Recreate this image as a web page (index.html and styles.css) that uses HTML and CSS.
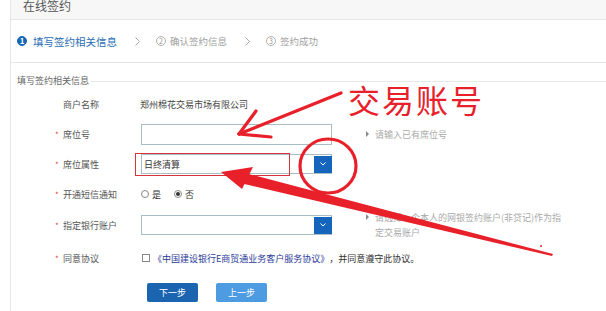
FILE: index.html
```html
<!DOCTYPE html>
<html lang="zh-CN">
<head>
    <meta charset="UTF-8">
    <meta name="viewport" content="width=device-width, initial-scale=1.0">
    <title>在线签约</title>
    <link rel="stylesheet" href="styles.css">
</head>
<body>
    <div class="page">
        <div class="page-head">
            <span class="page-title">在线签约</span>
        </div>

        <div class="steps">
            <div class="step step-active">
                <span class="step-num">1</span>
                <span class="step-text">填写签约相关信息</span>
            </div>
            <svg class="step-sep" width="5" height="9" viewBox="0 0 5 9"><polyline points="0.5,0.5 4.5,4.5 0.5,8.5" fill="none" stroke="#aaa" stroke-width="1"/></svg>
            <div class="step">
                <span class="step-num">2</span>
                <span class="step-text">确认签约信息</span>
            </div>
            <svg class="step-sep" width="5" height="9" viewBox="0 0 5 9"><polyline points="0.5,0.5 4.5,4.5 0.5,8.5" fill="none" stroke="#aaa" stroke-width="1"/></svg>
            <div class="step">
                <span class="step-num">3</span>
                <span class="step-text">签约成功</span>
            </div>
        </div>

        <div class="section">
            <div class="legend"><span>填写签约相关信息</span></div>

            <div class="row">
                <div class="row-label"><span class="star"></span>商户名称</div>
                <div class="row-value">郑州棉花交易市场有限公司</div>
            </div>

            <div class="row">
                <div class="row-label"><span class="star">*</span>席位号</div>
                <div class="input"></div>
                <div class="hint"><span class="hint-mark"></span><span class="hint-text">请输入已有席位号</span></div>
            </div>

            <div class="row">
                <div class="row-label"><span class="star">*</span>席位属性</div>
                <div class="select">
                    <span>日终清算</span>
                    <span class="select-btn"><svg width="6" height="4" viewBox="0 0 6 4"><polyline points="0.5,0.5 3,3 5.5,0.5" fill="none" stroke="#fff" stroke-width="1"/></svg></span>
                </div>
            </div>

            <div class="row">
                <div class="row-label"><span class="star">*</span>开通短信通知</div>
                <label class="radio"><span class="radio-dot"></span>是</label>
                <label class="radio radio-on"><span class="radio-dot"></span>否</label>
            </div>

            <div class="row row-mid">
                <div class="row-label"><span class="star">*</span>指定银行账户</div>
                <div class="select">
                    <span></span>
                    <span class="select-btn"><svg width="6" height="4" viewBox="0 0 6 4"><polyline points="0.5,0.5 3,3 5.5,0.5" fill="none" stroke="#fff" stroke-width="1"/></svg></span>
                </div>
                <div class="hint"><span class="hint-mark"></span><span class="hint-text">请选择一个本人的网银签约账户(非贷记)作为指定交易账户</span></div>
            </div>

            <div class="row row-tall">
                <div class="row-label"><span class="star">*</span>同意协议</div>
                <span class="checkbox"></span>
                <a class="agree-link">《中国建设银行E商贸通业务客户服务协议》</a>
                <span class="agree-text">，并同意遵守此协议。</span>
            </div>

            <div class="actions">
                <button class="btn btn-primary">下一步</button>
                <button class="btn btn-light">上一步</button>
            </div>
        </div>
    </div>

    <!-- red hand-drawn notes on top of the screenshot -->
    <svg class="marks" width="606" height="311" viewBox="0 0 606 311">
        <rect x="135.5" y="153.5" width="154" height="22" fill="none" stroke="#d8343a" stroke-width="1"/>
        <g stroke="#e8202a" stroke-width="3.2" stroke-linecap="round" fill="none">
            <path d="M341 93 L239 134"/>
            <path d="M239 134 L256 111"/>
            <path d="M239 134 L271 137"/>
            <ellipse cx="328" cy="166" rx="28" ry="27"/>
        </g>
        <polygon points="245,173 553,254 552,256 240,183" fill="#e8202a"/>
        <polygon points="221,172 253,167 242,189" fill="#e8202a"/>
        <circle cx="541" cy="246" r="1" fill="#e8202a"/>
        <text class="mark-text" x="348" y="113">交易账号</text>
    </svg>
</body>
</html>
```

FILE: styles.css
```css
* {
    box-sizing: border-box;
    margin: 0;
    padding: 0;
}

body {
    position: relative;
    font-family: "Noto Sans CJK SC", "Noto Sans", sans-serif;
    font-size: 9px;
    color: #444;
    background: #fff;
    width: 606px;
    height: 311px;
    overflow: hidden;
}

.page {
    margin-left: 10px;
    border-left: 1px solid #e6e6e6;
    height: 311px;
}

.page-head {
    height: 20px;
    background: #f7f7f7;
    border-bottom: 1px solid #e6e6e6;
    padding-left: 12px;
}

.page-title {
    display: block;
    font-size: 12px;
    line-height: 12px;
    color: #555;
}

.steps {
    display: flex;
    align-items: center;
    height: 43px;
    border-bottom: 1px solid #e6e6e6;
    padding-left: 6px;
}

.step {
    display: flex;
    align-items: center;
}

.step-num {
    width: 10px;
    height: 10px;
    border-radius: 50%;
    border: 1px solid #b0b0b0;
    color: #999;
    font-size: 7px;
    line-height: 8px;
    text-align: center;
}

.step-text {
    margin-left: 4px;
    color: #a0a0a0;
    font-size: 9.5px;
}

.step-active .step-num {
    background: #1767b8;
    border-color: #1767b8;
    color: #fff;
    font-size: 8px;
    font-weight: bold;
}

.step-active .step-text {
    margin-left: 6px;
    color: #2a6db5;
    font-size: 10.5px;
}

.step-sep {
    margin: 0 16px 0 18px;
}

.section {
    padding: 12px 0 0 6px;
}

.legend {
    display: flex;
    align-items: center;
    height: 12px;
    color: #666;
    line-height: 12px;
    margin-bottom: 2px;
}

.legend::after {
    content: "";
    flex: 1;
    border-top: 1px solid #e8e8e8;
    margin-left: 2px;
}

.row {
    display: flex;
    align-items: center;
    height: 30px;
    padding-left: 38px;
}

.row-mid {
    height: 32px;
}

.row-tall {
    height: 34px;
}

.row-label {
    display: flex;
    align-items: center;
    width: 86px;
    color: #555;
}

.star {
    width: 8px;
    color: #e04848;
    font-size: 8px;
}

.row-value {
    color: #444;
    margin-left: -1px;
}

.input {
    width: 191px;
    height: 21px;
    border: 1px solid #a9bdc6;
}

.select {
    display: flex;
    align-items: center;
    justify-content: space-between;
    width: 191px;
    height: 20px;
    border: 1px solid #a9bdc6;
    padding-left: 2px;
    color: #333;
}

.select-btn {
    display: flex;
    align-items: center;
    justify-content: center;
    width: 18px;
    height: 17px;
    margin-right: -1px;
    background: #1565bd;
}

.hint {
    display: flex;
    align-items: flex-start;
    margin-left: 34px;
    color: #aaa;
    line-height: 15px;
}

.hint-mark {
    width: 0;
    height: 0;
    margin-top: 4px;
    margin-right: 6px;
    border-left: 3px solid #888;
    border-top: 3px solid transparent;
    border-bottom: 3px solid transparent;
}

.hint-text {
    width: 188px;
}

.radio {
    display: flex;
    align-items: center;
    color: #333;
}

.radio + .radio {
    margin-left: 13px;
}

.radio-dot {
    width: 8px;
    height: 8px;
    border: 1px solid #888;
    border-radius: 50%;
    margin-right: 3px;
    display: flex;
    align-items: center;
    justify-content: center;
}

.radio-on .radio-dot::after {
    content: "";
    width: 4px;
    height: 4px;
    border-radius: 50%;
    background: #333;
}

.checkbox {
    width: 8px;
    height: 8px;
    border: 1px solid #888;
    margin-left: 1px;
}

.agree-link {
    margin-left: 3px;
    color: #2b3a9a;
}

.agree-text {
    color: #333;
}

.actions {
    display: flex;
    gap: 18px;
    margin: 8px 0 0 130px;
}

.btn {
    width: 51px;
    height: 19px;
    border: none;
    border-radius: 2px;
    color: #fff;
    font-family: inherit;
    font-size: 9px;
}

.btn-primary {
    background: #1a64b0;
}

.btn-light {
    background: #4d9be0;
}

.marks {
    position: absolute;
    left: 0;
    top: 0;
    pointer-events: none;
}

.mark-text {
    font-family: "Noto Sans CJK SC", sans-serif;
    font-size: 32px;
    letter-spacing: 2px;
    fill: #e8202a;
}
```
